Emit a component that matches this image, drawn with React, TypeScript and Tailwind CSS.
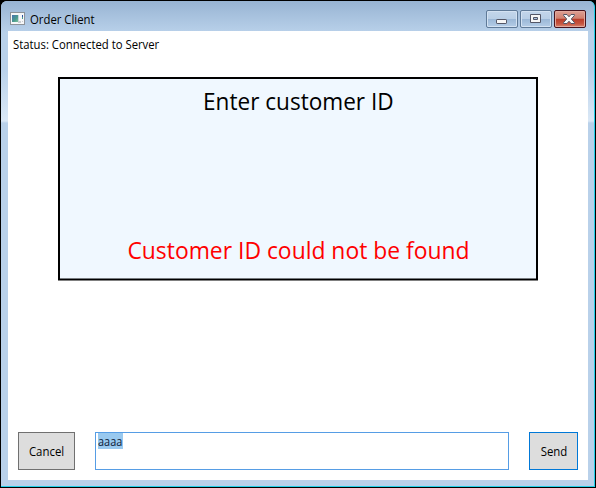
import type { ReactNode } from "react";

function AppIcon() {
  return (
    <svg width="16" height="14" viewBox="0 0 16 14" shapeRendering="crispEdges">
      <defs>
        <linearGradient id="pane" x1="0" y1="0" x2="1" y2="1">
          <stop offset="0" stopColor="#4672b0" />
          <stop offset="0.6" stopColor="#4b9b8d" />
          <stop offset="1" stopColor="#7cc09a" />
        </linearGradient>
      </defs>
      <rect x="0" y="0" width="15" height="13" fill="#8d9298" />
      <rect x="1" y="1" width="13" height="11" fill="#f6f7f8" />
      <rect x="2" y="3" width="6" height="7" fill="url(#pane)" />
      <rect x="8" y="3" width="1" height="7" fill="#c5d4dc" />
      <rect x="12" y="3" width="1" height="2" fill="#2c50a4" />
      <rect x="12" y="5" width="1" height="2" fill="#4b9b8d" />
      <rect x="8" y="9" width="3" height="2" fill="#c9cdd1" />
      <rect x="12" y="9" width="1" height="1" fill="#c9cdd1" />
    </svg>
  );
}

function CaptionButton({ label, className, children }: { label: string; className: string; children: ReactNode }) {
  return (
    <button
      aria-label={label}
      className={`flex h-[18px] w-8 items-center justify-center rounded-[2px] border ${className}`}
    >
      {children}
    </button>
  );
}

const plain =
  "border-[#5f7a98] bg-[linear-gradient(#c3d6eb_0%,#b9cfe6_48%,#9ab7d6_50%,#b5cde7_100%)] shadow-[inset_0_0_0_1px_#d3e2f2]";
const closing =
  "border-[#47131d] bg-[linear-gradient(#dda094_0%,#d0806f_46%,#b93c29_50%,#c65641_80%,#d98772_100%)] shadow-[inset_0_0_0_1px_#e2a99d]";

function TitleBar() {
  return (
    <header className="flex h-[30px] shrink-0 items-start justify-between pr-2 pl-[9px]">
      <div className="flex items-start pt-[11px]">
        <AppIcon />
        <span className="ml-1 origin-left scale-x-[0.945] text-xs leading-4 whitespace-nowrap">Order Client</span>
      </div>
      <div className="flex gap-0.5 pt-[9px]">
        <CaptionButton label="Minimize" className={plain}>
          <svg width="11" height="5" viewBox="0 0 11 5" className="mt-1 -ml-px">
            <rect x="0.5" y="0.5" width="10" height="4" rx="0.6" fill="#f6f6f6" stroke="#535666" />
          </svg>
        </CaptionButton>
        <CaptionButton label="Maximize" className={plain}>
          <svg width="11" height="9" viewBox="0 0 11 9" className="-mt-px -ml-px">
            <path d="M.5.5h10v8H.5z" fill="#f6f6f6" stroke="#535666" />
            <path d="M3.5 3.5h4v2h-4z" fill="#a9c2df" stroke="#535666" />
          </svg>
        </CaptionButton>
        <CaptionButton label="Close" className={closing}>
          <svg width="12" height="10" viewBox="0 0 12 10" className="-ml-0.5">
            <path
              d="M.6.5H4L6 2.8 8 .5h3.4v1L8.3 5l3.1 3.5v1H8L6 7.2 4 9.5H.6v-1L3.7 5 .6 1.5z"
              fill="#f8f8f8"
              stroke="#535666"
            />
          </svg>
        </CaptionButton>
      </div>
    </header>
  );
}

export default function App() {
  return (
    <div className="h-[488px] w-[596px] bg-black font-['Open_Sans','Noto_Sans',sans-serif] text-black">
      <div className="h-full p-px">
        <div className="flex h-[486px] flex-col overflow-hidden rounded-t-[6px] border-r border-b border-[#22cfe8] bg-[#b9d1ea] bg-[linear-gradient(#98b4d3_0px,#b9d1ea_32px,#b9d1ea_68px,#dae8f6_120px,#b9d1ea_122px)]">
          <TitleBar />
          <main className="mr-1.5 mb-1.5 ml-[7px] flex h-[449px] flex-col bg-white">
            <div className="h-[46px] pt-1.5 pl-[5px]">
              <p className="w-max origin-left scale-x-[0.943] text-xs leading-4">Status: Connected to Server</p>
            </div>
            <section className="ml-[50px] flex h-[204px] w-[480px] flex-col">
              <div className="flex flex-1 flex-col items-center justify-between border-2 border-b-0 border-black bg-[#f0f8ff] pt-1.5 pb-3 text-2xl leading-8">
                <p className="scale-x-[0.94] whitespace-nowrap">Enter customer ID</p>
                <p className="scale-x-[0.953] whitespace-nowrap text-[#ff0000]">Customer ID could not be found</p>
              </div>
              <div className="h-px border-x-2 border-black bg-[#787c80]" />
              <div className="h-px bg-black" />
              <div className="h-px bg-[#808080]" />
            </section>
            <footer className="mt-auto mb-2.5 flex h-[38px] justify-between px-2.5">
              <button className="flex w-[57px] items-center justify-center border border-[#707070] bg-[#dddddd] pt-0.5 text-xs">
                <span className="scale-x-[0.95]">Cancel</span>
              </button>
              <div className="w-[414px] border border-[#569de5] pl-0.5">
                <div className="flex h-4 w-[25px] bg-[#99c9ef] pt-px text-xs leading-4 text-[#0c1a38]">
                  <span className="origin-left scale-x-[0.91]">aaaa</span>
                </div>
              </div>
              <button className="flex w-[49px] items-center justify-center border border-[#0078d7] bg-[#dddddd] pt-0.5 pl-px text-xs">
                <span className="scale-x-[0.95]">Send</span>
              </button>
            </footer>
          </main>
        </div>
      </div>
    </div>
  );
}
